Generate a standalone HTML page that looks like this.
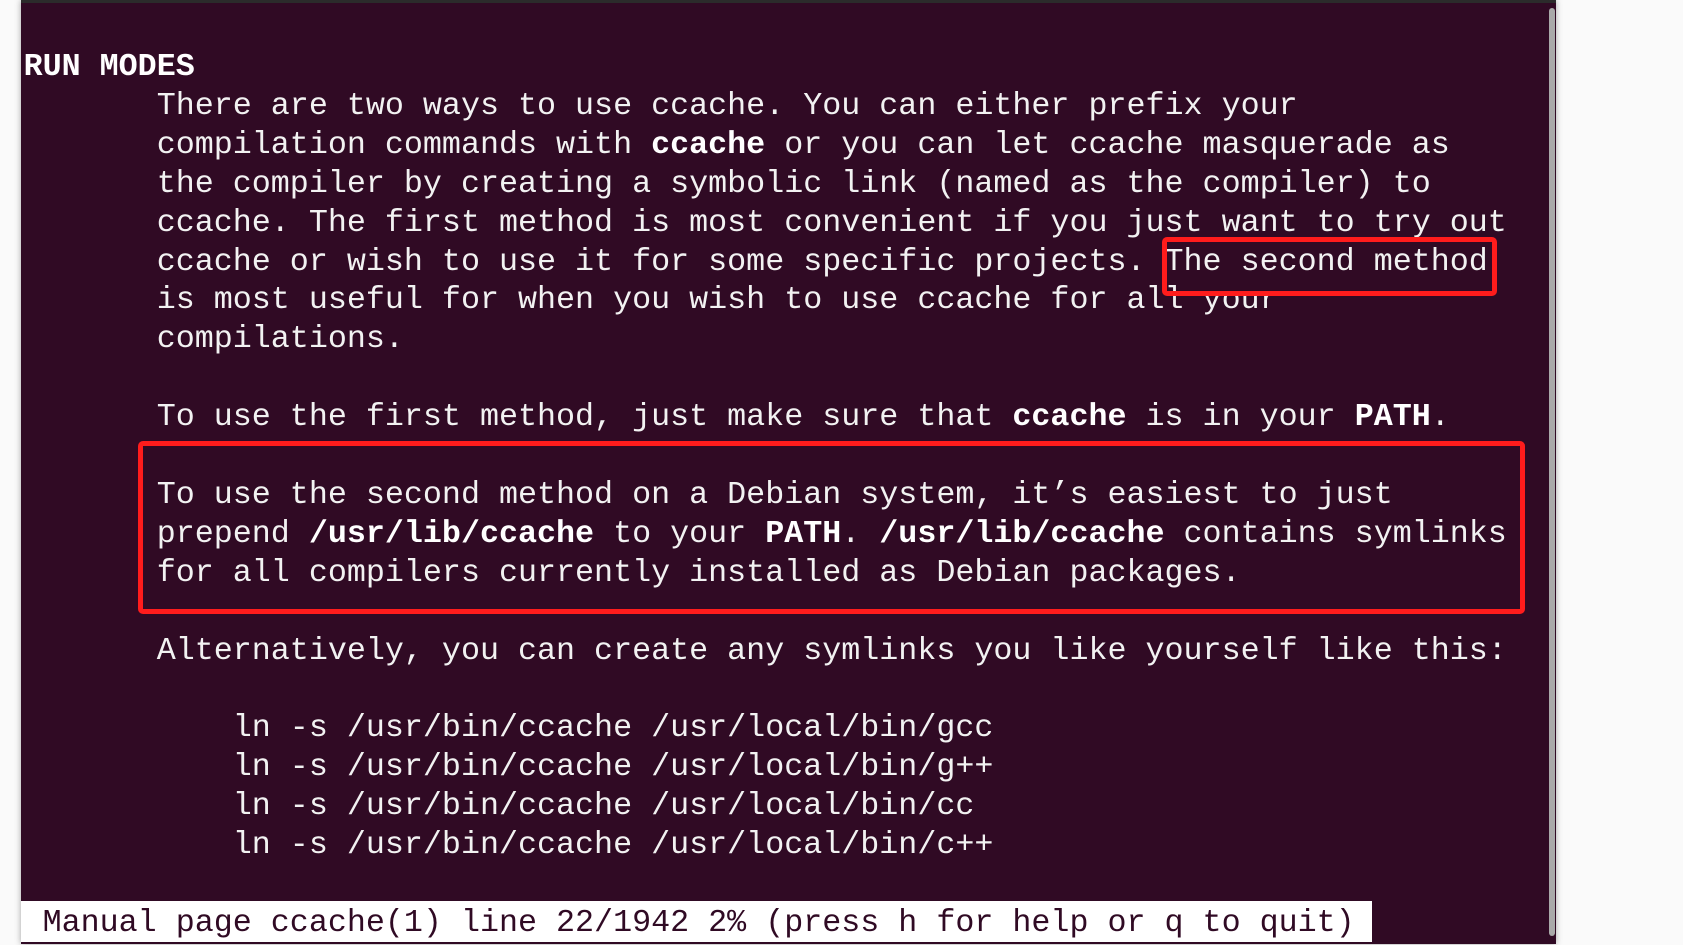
<!DOCTYPE html>
<html><head><meta charset="utf-8"><style>
html,body{margin:0;padding:0;width:1683px;height:945px;overflow:hidden;background:#fafafa;}
.term{position:absolute;left:21px;top:0;width:1535px;height:944px;background:#300a24;box-shadow:0 0 6px rgba(0,0,0,.35);}
.topbar{position:absolute;left:0;top:0;width:100%;height:3px;background:#2b2b2b;}
.scroll{position:absolute;left:1528px;top:8px;width:6px;height:928px;background:#a9a9a9;border-radius:3px;}
pre{position:absolute;left:2.6px;top:48px;margin:0;font-family:"Liberation Mono",monospace;font-size:31.7px;line-height:38.9px;color:#f2f2f2;white-space:pre;}
b{font-weight:bold;color:#fff;}
.status{position:absolute;left:21px;top:901px;width:1351px;height:41px;background:#fff;}
.st{position:absolute;left:23.6px;top:48px;margin:0;font-family:"Liberation Mono",monospace;font-size:31.7px;line-height:38.9px;color:#300a24;white-space:pre;}
.box{position:absolute;border:5px solid #ff1c1c;border-radius:5px;}
</style></head><body>
<div class="term"><div class="topbar"></div><div class="scroll"></div></div>
<div class="status"></div>
<pre style="left:23.6px"><b>RUN MODES</b>
       There are two ways to use ccache. You can either prefix your
       compilation commands with <b>ccache</b> or you can let ccache masquerade as
       the compiler by creating a symbolic link (named as the compiler) to
       ccache. The first method is most convenient if you just want to try out
       ccache or wish to use it for some specific projects. The second method
       is most useful for when you wish to use ccache for all your
       compilations.

       To use the first method, just make sure that <b>ccache</b> is in your <b>PATH</b>.

       To use the second method on a Debian system, it’s easiest to just
       prepend <b>/usr/lib/ccache</b> to your <b>PATH</b>. <b>/usr/lib/ccache</b> contains symlinks
       for all compilers currently installed as Debian packages.

       Alternatively, you can create any symlinks you like yourself like this:

           ln -s /usr/bin/ccache /usr/local/bin/gcc
           ln -s /usr/bin/ccache /usr/local/bin/g++
           ln -s /usr/bin/ccache /usr/local/bin/cc
           ln -s /usr/bin/ccache /usr/local/bin/c++
</pre>
<pre class="st" style="top:903.8px"> Manual page ccache(1) line 22/1942 2% (press h for help or q to quit)</pre>
<div class="box" style="left:1162px;top:237px;width:325px;height:49px;"></div>
<div class="box" style="left:138px;top:441px;width:1377px;height:163px;"></div>
</body></html>
